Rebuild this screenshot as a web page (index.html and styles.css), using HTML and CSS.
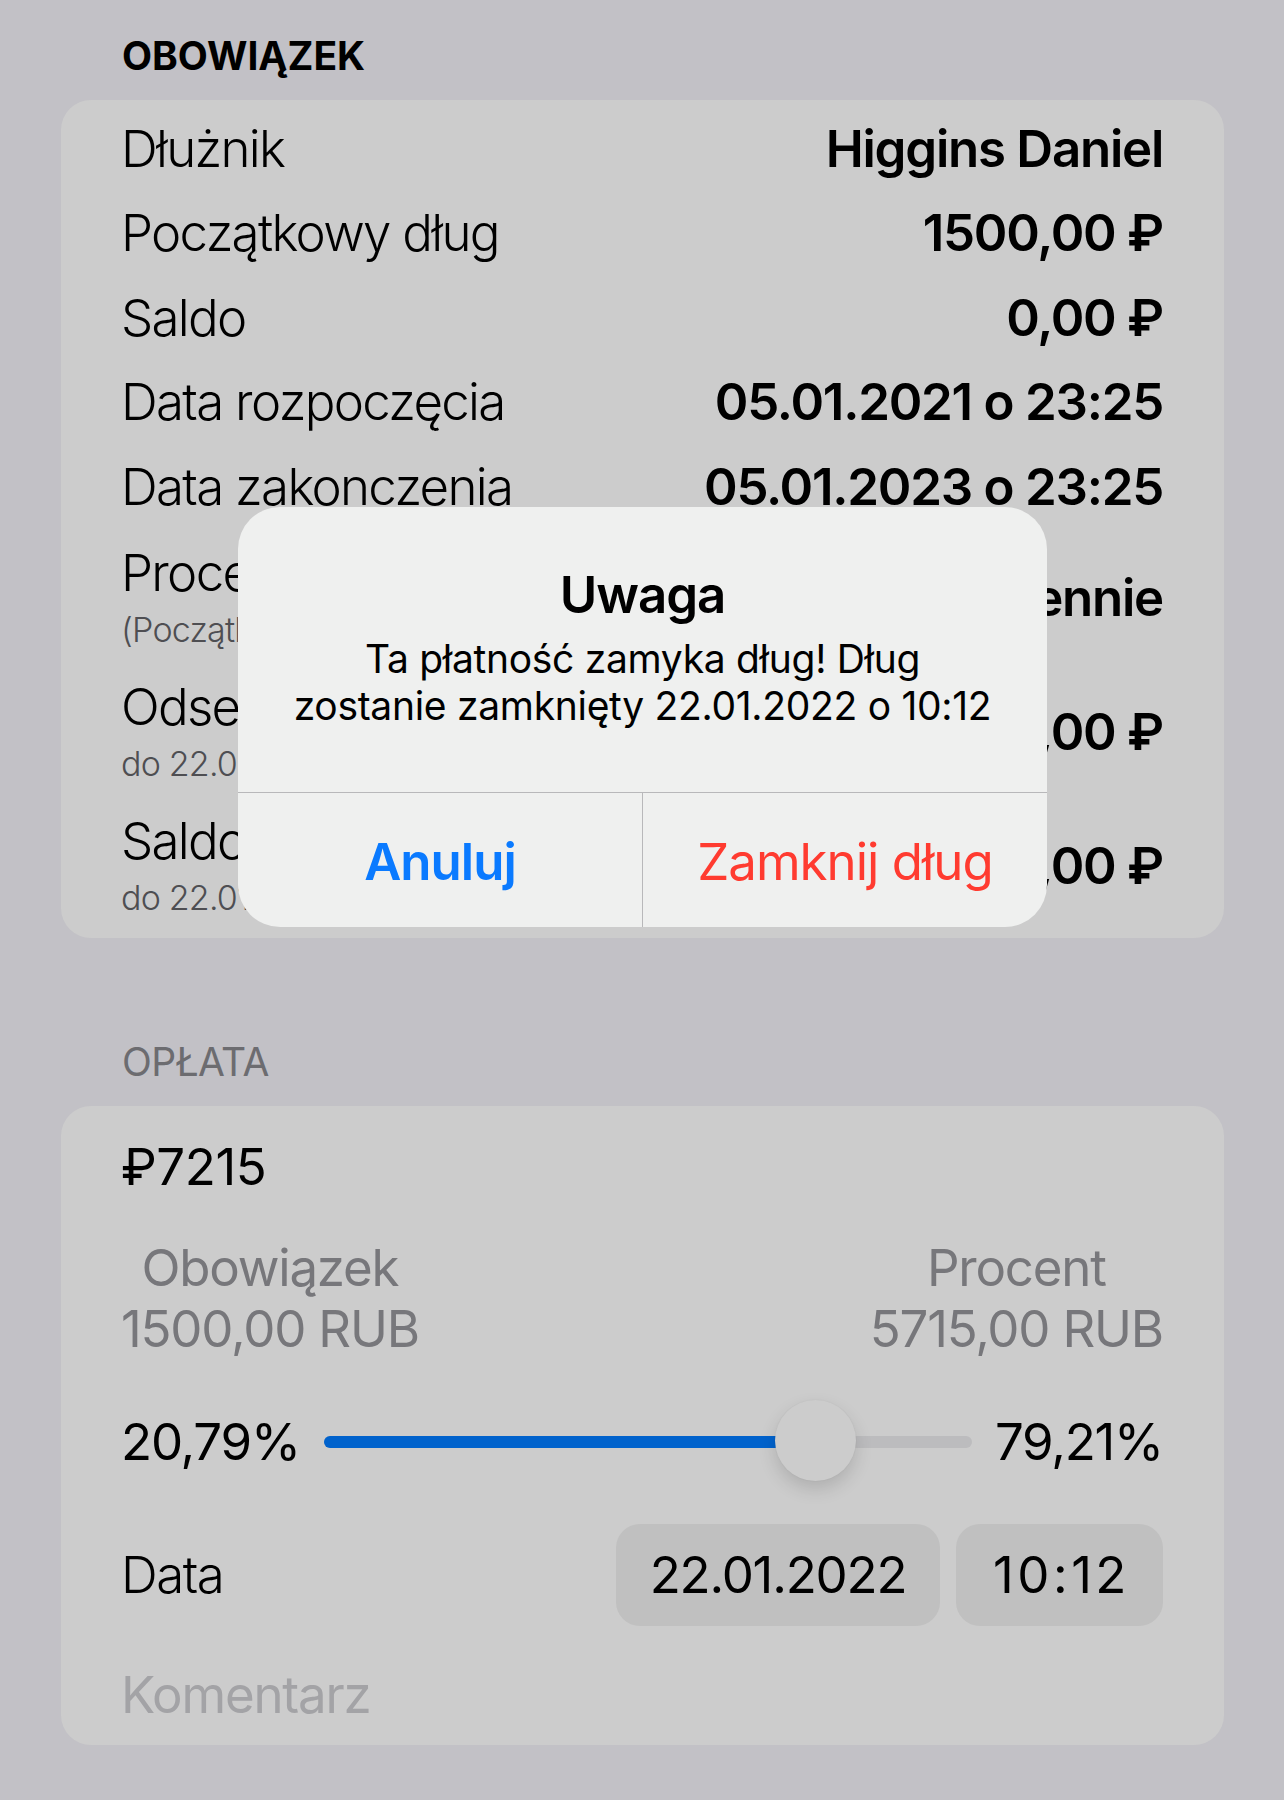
FILE: index.html
```html
<!DOCTYPE html>
<html lang="pl">
<head>
<meta charset="utf-8">
<title>Obowiązek</title>
<link rel="stylesheet" href="styles.css">
</head>
<body>
<div class="screen">
  <div class="section-title title-strong">OBOWIĄZEK</div>
  <div class="card card-debt">
    <div class="row"><span class="label">Dłużnik</span><span class="value">Higgins Daniel</span></div>
    <div class="row"><span class="label">Początkowy dług</span><span class="value">1500,00 ₽</span></div>
    <div class="row"><span class="label">Saldo</span><span class="value">0,00 ₽</span></div>
    <div class="row"><span class="label">Data rozpoczęcia</span><span class="value">05.01.2021 o 23:25</span></div>
    <div class="row"><span class="label">Data zakonczenia</span><span class="value">05.01.2023 o 23:25</span></div>
    <div class="row row-two">
      <div class="label-group"><div class="label">Procent</div><div class="sub">(Początkowy dług)</div></div>
      <span class="value">0,1% dziennie</span>
    </div>
    <div class="row row-two">
      <div class="label-group"><div class="label">Odsetki</div><div class="sub">do 22.01.2022</div></div>
      <span class="value">5715,00 ₽</span>
    </div>
    <div class="row row-two">
      <div class="label-group"><div class="label">Saldo</div><div class="sub">do 22.01.2022</div></div>
      <span class="value">7215,00 ₽</span>
    </div>
  </div>

  <div class="section-title title-muted">OPŁATA</div>
  <div class="card card-pay">
    <div class="amount">₽7215</div>
    <div class="split">
      <div class="split-col"><div>Obowiązek</div><div>1500,00 RUB</div></div>
      <div class="split-col"><div>Procent</div><div>5715,00 RUB</div></div>
    </div>
    <div class="slider-row">
      <span class="pct">20,79%</span>
      <div class="track">
        <div class="track-fill" style="width: 75.8%"></div>
        <div class="thumb" style="left: 75.8%"></div>
      </div>
      <span class="pct">79,21%</span>
    </div>
    <div class="date-row">
      <span class="date-label">Data</span>
      <div class="pills">
        <span class="pill pill-date">22.01.2022</span>
        <span class="pill pill-time">10:12</span>
      </div>
    </div>
    <div class="comment">Komentarz</div>
  </div>

  <div class="alert">
    <div class="alert-body">
      <div class="alert-title">Uwaga</div>
      <div class="alert-msg">Ta płatność zamyka dług! Dług<br>zostanie zamknięty 22.01.2022 o 10:12</div>
    </div>
    <div class="alert-actions">
      <div class="alert-btn btn-cancel">Anuluj</div>
      <div class="alert-btn btn-destroy">Zamknij dług</div>
    </div>
  </div>
</div>
</body>
</html>
```

FILE: styles.css
```css
* { box-sizing: border-box; }
html, body { margin: 0; padding: 0; }
body {
  background: #c2c1c6;
  font-family: Inter, "Noto Sans", "DejaVu Sans", sans-serif;
  color: #000;
  width: 1284px;
  height: 1800px;
  overflow: hidden;
}
.screen {
  position: relative;
  padding-top: 32px;
  height: 1800px;
}
.section-title {
  font-size: 39px;
  line-height: 47px;
  padding-left: 122px;
  margin-bottom: 21px;
}
.title-strong { font-weight: 700; }
.title-muted { font-weight: 400; color: #6c6c70; margin-top: 100px; letter-spacing: -0.6px; }

.card {
  margin: 0 60px 0 61px;
  background: #cccccc;
  border-radius: 30px;
  padding: 0 61px 0 60px;
}
.card-debt { padding-top: 6.5px; padding-bottom: 7px; }
.row {
  display: flex;
  justify-content: space-between;
  align-items: center;
  height: 84.5px;
  font-size: 51px;
  line-height: 62px;
  white-space: nowrap;
}
.row-two {
  height: 134px;
  padding-top: 13px;
  padding-bottom: 7px;
  align-items: stretch;
}
.row-two .value { align-self: center; margin-top: -3px; }
.label { font-weight: 300; letter-spacing: -1.7px; }
.value { font-weight: 600; letter-spacing: -1.25px; }
.sub {
  font-size: 34px;
  line-height: 52px;
  font-weight: 300;
  color: #4e4e52;
  letter-spacing: -0.8px;
}

.card-pay { padding-top: 30px; padding-bottom: 19.5px; letter-spacing: -1.2px; }
.amount { font-size: 51px; line-height: 62px; letter-spacing: -0.4px; }
.split {
  display: flex;
  justify-content: space-between;
  margin-top: 39px;
  font-size: 51px;
  line-height: 61px;
  color: #77777b;
}
.split-col { text-align: center; }
.slider-row {
  display: flex;
  align-items: center;
  height: 82px;
  margin-top: 42px;
  font-size: 51px;
  line-height: 62px;
}
.track {
  position: relative;
  flex: 1;
  height: 12px;
  border-radius: 6px;
  background: #bcbcbe;
  margin: 0 23px 0 24px;
}
.track-fill {
  height: 12px;
  border-radius: 6px;
  background: #0062cc;
}
.thumb {
  position: absolute;
  top: 50%;
  width: 81px;
  height: 81px;
  margin: -42px 0 0 -40px;
  border-radius: 50%;
  background: #cccccc;
  box-shadow: 0 8px 18px rgba(0, 0, 0, 0.14), 0 0 2px rgba(0, 0, 0, 0.06);
}
.date-row {
  display: flex;
  justify-content: space-between;
  align-items: center;
  margin-top: 41px;
  height: 102px;
  font-size: 51px;
  line-height: 62px;
}
.date-label { font-weight: 300; letter-spacing: -1.5px; }
.pills { display: flex; gap: 16px; }
.pill {
  display: flex;
  align-items: center;
  justify-content: center;
  height: 102px;
  background: #c0c0c0;
  border-radius: 24px;
}
.pill-date { width: 324px; }
.pill-time { width: 207px; letter-spacing: 3.5px; padding-left: 4px; }
.comment {
  margin-top: 37.5px;
  font-size: 51px;
  line-height: 62px;
  color: #a3a3a6;
}

.alert {
  position: absolute;
  left: 238px;
  top: 507px;
  width: 809px;
  height: 420px;
  background: #eff0ef;
  border-radius: 42px;
  overflow: hidden;
  display: flex;
  flex-direction: column;
  text-align: center;
}
.alert-body {
  height: 286px;
  padding-top: 57px;
  border-bottom: 1.5px solid #b8b8ba;
}
.alert-title {
  font-size: 51px;
  line-height: 62px;
  font-weight: 600;
  letter-spacing: -1px;
}
.alert-msg {
  margin-top: 9px;
  font-size: 39px;
  line-height: 47px;
  letter-spacing: -0.3px;
}
.alert-actions {
  display: flex;
  flex: 1;
}
.alert-btn {
  flex: 1;
  display: flex;
  align-items: center;
  justify-content: center;
  font-size: 51px;
  line-height: 62px;
  padding-top: 4px;
  letter-spacing: -1px;
}
.btn-cancel { color: #0a7aff; font-weight: 600; border-right: 1.5px solid #b8b8ba; }
.btn-destroy { color: #ff3b30; }
```
